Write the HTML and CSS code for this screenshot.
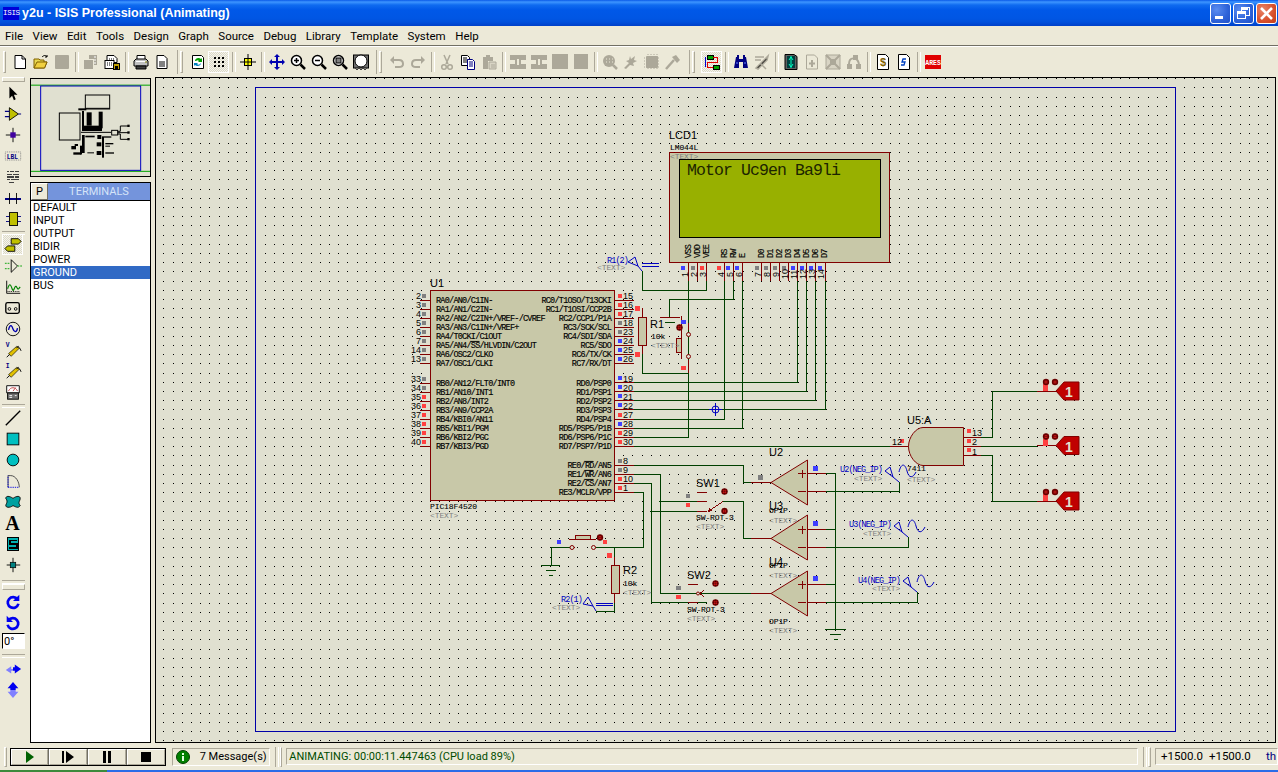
FILE: index.html
```html
<!DOCTYPE html>
<html lang="en">
<head>
<meta charset="utf-8">
<title>y2u - ISIS Professional (Animating)</title>
<link rel="stylesheet" href="styles.css">
</head>
<body>
<div class="window">
  <header class="titlebar">
    <span class="app-icon">ISIS</span>
    <span class="title">y2u - ISIS Professional (Animating)</span>
    <div class="win-btns">
      <button class="wb"><svg width="21" height="21" viewBox="0 0 21 21"><rect x="5" y="13" width="8" height="3" fill="#fff"/></svg></button>
      <button class="wb"><svg width="21" height="21" viewBox="0 0 21 21" fill="none" stroke="#fff" shape-rendering="crispEdges"><path d="M8 4.500h8v8h-3M8 4.500v3" stroke-width="1"/><path d="M8 6h7" stroke-width="2"/><rect x="4.500" y="8.500" width="8" height="7"/><path d="M5 10h7" stroke-width="2"/></svg></button>
      <button class="wb wb-close"><svg width="21" height="21" viewBox="0 0 21 21"><path d="M5 5l11 11M16 5L5 16" stroke="#fff" stroke-width="2.600"/></svg></button>
    </div>
  </header>
  <nav class="menubar">
    <span>File</span><span>View</span><span>Edit</span><span>Tools</span><span>Design</span><span>Graph</span><span>Source</span><span>Debug</span><span>Library</span><span>Template</span><span>System</span><span>Help</span>
  </nav>
  <div class="toolbar">
    <i class="handle handle-first"></i>
    <b class="tb"><svg viewBox="0 0 16 16" class="ic"><path d="M3 1.500h7l3.500 3.500v9.500H3z" fill="#fff" stroke="#000"/><path d="M10 1.500V5h3.500" fill="none" stroke="#000"/></svg></b>
    <b class="tb"><svg viewBox="0 0 16 16" class="ic"><path d="M1 14V5h5l1 1h4v2h3l-2.500 6z" fill="#e8d850" stroke="#806000"/><path d="M1 14l3-6h10l-2.500 6z" fill="#f0d040" stroke="#806000"/><path d="M9 3c2-2 4-2 5 0M14 3V1M14 3h-2" fill="none" stroke="#000"/></svg></b>
    <b class="tb"><svg viewBox="0 0 16 16" class="ic"><rect x="1" y="1" width="14" height="14" rx="1" fill="#aca899"/></svg></b>
    <i class="sep"></i>
    <b class="tb"><svg viewBox="0 0 16 16" class="ic"><path d="M1 6h9v9H1z" fill="#aca899"/><path d="M6 1h8v10h-3V5H6z" fill="#aca899"/><path d="M11 3h2M11 6h2M11 9h2" stroke="#fff"/></svg></b>
    <b class="tb"><svg viewBox="0 0 16 16" class="ic"><path d="M3 1.500h7l3 3v4H3z" fill="#fff" stroke="#000"/><path d="M5 5h1M7 5h1M9 5h1M5 7h1M7 7h1M9 7h1" stroke="#000"/><rect x="1" y="6.500" width="9" height="8" fill="#fff" stroke="#000"/><rect x="9.500" y="9.500" width="6" height="6" fill="#c0a000" stroke="#000"/><rect x="11" y="12" width="3" height="3" fill="#000"/><path d="M3 9h1M5 9h1M7 9h1M3 11h1M5 11h1M7 11h1" stroke="#000"/></svg></b>
    <i class="sep"></i>
    <b class="tb"><svg viewBox="0 0 16 16" class="ic"><path d="M4 1.500h8v4H4z" fill="#fff" stroke="#000"/><path d="M1 7l2-2h10l2 2v5H1z" fill="#c0c0c0" stroke="#000"/><path d="M3 7.500h10" stroke="#fff"/><path d="M3 12h10v3H3z" fill="#404040" stroke="#000"/><path d="M12 8h2" stroke="#808000"/></svg></b>
    <b class="tb"><svg viewBox="0 0 16 16" class="ic"><path d="M3 1.500h7l3 3v10H3z" fill="#fff" stroke="#000"/><rect x="5" y="7" width="6" height="6" fill="#808080"/></svg></b>
    <i class="grip"><i class="handle"></i></i>
    <b class="tb"><svg viewBox="0 0 16 16" class="ic"><path d="M2.500 1.500h9l2 2v11h-11z" fill="#fff" stroke="#000"/><path d="M5 7c0-3 4-4 6-2l1-1v4H8l1-1c-1-1-2-1-3 0z" fill="#00a000"/><path d="M11 9c0 3-4 4-6 2l-1 1V9h4l-1 1c1 1 2 1 3 0z" fill="#0080c0"/></svg></b>
    <b class="tb on"><svg viewBox="0 0 16 16" class="ic"><path d="M3 3h2v2H3zM7 3h2v2H7zM11 3h2v2h-2zM3 7h2v2H3zM7 7h2v2H7zM11 7h2v2h-2zM3 11h2v2H3zM7 11h2v2H7zM11 11h2v2h-2z" fill="#000"/></svg></b>
    <i class="sep"></i>
    <b class="tb"><svg viewBox="0 0 16 16" class="ic"><rect x="4.500" y="4.500" width="7" height="7" fill="#ffff00" stroke="#000"/><path d="M8 0v16M0 8h16" stroke="#000" stroke-width="1"/></svg></b>
    <i class="sep"></i>
    <b class="tb"><svg viewBox="0 0 16 16" class="ic"><path d="M8 0l3 3H9v4h4V5l3 3-3 3V9H9v4h2l-3 3-3-3h2V9H3v2L0 8l3-3v2h4V3H5z" fill="#0000b0"/></svg></b>
    <b class="tb"><svg viewBox="0 0 16 16" class="ic"><circle cx="6.500" cy="6.500" r="5" fill="#fff" stroke="#000" stroke-width="1.500"/><path d="M4 6.500h5M6.500 4v5" stroke="#000" stroke-width="1.500"/><path d="M10.500 10.500L15 15" stroke="#000" stroke-width="2.500"/></svg></b>
    <b class="tb"><svg viewBox="0 0 16 16" class="ic"><circle cx="6.500" cy="6.500" r="5" fill="#fff" stroke="#000" stroke-width="1.500"/><path d="M4 6.500h5" stroke="#000" stroke-width="1.500"/><path d="M10.500 10.500L15 15" stroke="#000" stroke-width="2.500"/></svg></b>
    <b class="tb"><svg viewBox="0 0 16 16" class="ic"><circle cx="6.500" cy="6.500" r="5" fill="#fff" stroke="#000" stroke-width="1.500"/><rect x="4" y="4" width="5" height="5" fill="#808080" stroke="#000"/><path d="M10.500 10.500L15 15" stroke="#000" stroke-width="2.500"/></svg></b>
    <b class="tb"><svg viewBox="0 0 16 16" class="ic"><rect x="0.500" y="1" width="15" height="13" fill="#707070" stroke="#000"/><circle cx="8" cy="7" r="6" fill="#fff" stroke="#000"/><path d="M2 14l2 2 2-2 2 2 2-2 2 2 2-2" fill="none" stroke="#404040"/></svg></b>
    <i class="grip"><i class="handle"></i></i>
    <b class="tb"><svg viewBox="0 0 16 16" class="ic"><path d="M2 6h8c3 0 4 2 4 4s-2 3-4 3H6" fill="none" stroke="#aca899" stroke-width="2"/><path d="M5 2v8L1 6z" fill="#aca899"/></svg></b>
    <b class="tb"><svg viewBox="0 0 16 16" class="ic"><path d="M14 6H6C3 6 2 8 2 10s2 3 4 3h4" fill="none" stroke="#aca899" stroke-width="2"/><path d="M11 2v8l4-4z" fill="#aca899"/></svg></b>
    <i class="sep"></i>
    <b class="tb"><svg viewBox="0 0 16 16" class="ic"><path d="M5 1l4 9M11 1L7 10" stroke="#aca899" stroke-width="1.500"/><circle cx="5" cy="13" r="2.300" fill="none" stroke="#aca899" stroke-width="1.500"/><circle cx="11" cy="13" r="2.300" fill="none" stroke="#aca899" stroke-width="1.500"/></svg></b>
    <b class="tb"><svg viewBox="0 0 16 16" class="ic"><path d="M1.500 1.500h6l2 2v8h-8z" fill="#fff" stroke="#000"/><path d="M3 4h4M3 6h5M3 8h5" stroke="#000"/><path d="M7.500 5.500h5l2 2v8h-7z" fill="#fff" stroke="#000080"/><path d="M9 8h4M9 10h4M9 12h4" stroke="#000080"/></svg></b>
    <b class="tb"><svg viewBox="0 0 16 16" class="ic"><path d="M2 3h3V1h4v2h3v4H7v8H2z" fill="#aca899"/><path d="M8 8h7v7H8z" fill="#d8d4c4" stroke="#aca899"/><path d="M10 11h4M10 13h4" stroke="#aca899"/></svg></b>
    <i class="sep"></i>
    <b class="tb"><svg viewBox="0 0 16 16" class="ic"><path d="M0 1h16v5h-5v4h5v5H0v-5h5V6H0z" fill="#aca899"/><path d="M7 5v6h2V5z" fill="#ece9d8"/></svg></b>
    <b class="tb"><svg viewBox="0 0 16 16" class="ic"><path d="M0 1h16v5h-5v4h5v5H0v-5h5V6H0z" fill="#aca899"/><path d="M7 5v6h2V5z" fill="#ece9d8"/></svg></b>
    <b class="tb"><svg viewBox="0 0 16 16" class="ic"><rect y="0" width="16" height="15" fill="#aca899"/></svg></b>
    <b class="tb"><svg viewBox="0 0 16 16" class="ic"><rect x="1" y="0" width="14" height="15" fill="#aca899"/></svg></b>
    <i class="sep"></i>
    <b class="tb"><svg viewBox="0 0 16 16" class="ic"><circle cx="7" cy="7" r="6" fill="#aca899"/><path d="M4 5h1M7 5h1M10 5h1M4 8h1M7 8h1M10 8h1" stroke="#ece9d8"/><path d="M11 11l4 4" stroke="#aca899" stroke-width="2.500"/></svg></b>
    <b class="tb"><svg viewBox="0 0 16 16" class="ic"><path d="M1 14l5-5-3-2 3-1 1-4 1 3 4-3-1 4 3 1-4 2 1 3-4-1-4 4z" fill="#aca899"/></svg></b>
    <b class="tb"><svg viewBox="0 0 16 16" class="ic"><rect x="2" y="2" width="12" height="12" rx="1" fill="#aca899"/><path d="M4 0v16M7 0v16M10 0v16M13 0v16M0 4h16M0 7h16M0 10h16M0 13h16" stroke="#aca899" stroke-dasharray="1 1"/></svg></b>
    <b class="tb"><svg viewBox="0 0 16 16" class="ic"><path d="M1 15L9 6" stroke="#aca899" stroke-width="2.500"/><path d="M7 3l4-2 4 5-3 3z" fill="#aca899"/></svg></b>
    <i class="grip grip-wide"><i class="handle"></i></i>
    <b class="tb on"><svg viewBox="0 0 16 16" class="ic" shape-rendering="crispEdges"><rect x="3" y="1" width="6" height="4" fill="#00a000" stroke="#000" stroke-width="1"/><rect x="9" y="11" width="6" height="4" fill="#00a000" stroke="#000" stroke-width="1"/><path d="M9 3h4v5H3v5h6" fill="none" stroke="#e00000"/><path d="M1 3v10" stroke="#0000d0" fill="none"/></svg></b>
    <i class="sep"></i>
    <b class="tb"><svg viewBox="0 0 16 16" class="ic"><path d="M3 3h3v2h4V3h3l2 11h-5V8H6v6H1z" fill="#000080"/><path d="M4 1h2v3H4zM10 1h2v3h-2z" fill="#000080"/><path d="M3 9h2M11 9h2" stroke="#6080ff"/></svg></b>
    <b class="tb"><svg viewBox="0 0 16 16" class="ic"><path d="M1 3h9M1 6h6" stroke="#aca899" stroke-width="1.500"/><path d="M2 14l9-9 3-3-1 4-9 9zM6 9l6 6" stroke="#aca899" stroke-width="1.500"/></svg></b>
    <i class="sep"></i>
    <b class="tb"><svg viewBox="0 0 16 16" class="ic"><path d="M2 0.500h9l3 2v13H2z" fill="#606060" stroke="#000"/><rect x="4" y="2" width="8" height="12" fill="#004040"/><path d="M8 2v12M6 6l2-3 2 3M6 10l2 3 2-3" stroke="#00ffc0" fill="none"/></svg></b>
    <b class="tb"><svg viewBox="0 0 16 16" class="ic"><path d="M2.500 1h8l3 3v11h-11z" fill="#ece9d8" stroke="#aca899"/><path d="M8 6v7M5 9.500h6" stroke="#aca899" stroke-width="2"/></svg></b>
    <b class="tb"><svg viewBox="0 0 16 16" class="ic"><path d="M1 1h14v14H1z" fill="#d8d4c4" stroke="#aca899"/><path d="M1 1l14 14M15 1L1 15" stroke="#aca899" stroke-width="2"/><rect x="5" y="5" width="6" height="6" fill="#aca899"/></svg></b>
    <b class="tb"><svg viewBox="0 0 16 16" class="ic"><rect x="1" y="10" width="5" height="5" fill="#aca899"/><rect x="10" y="10" width="5" height="5" fill="#aca899"/><path d="M3 10C3 3 11 2 13 10" fill="none" stroke="#aca899" stroke-width="2"/><rect x="7" y="1" width="5" height="5" fill="#aca899"/></svg></b>
    <i class="sep"></i>
    <b class="tb"><svg viewBox="0 0 16 16" class="ic"><path d="M2.500 0.500h8l3 3v12h-11z" fill="#fff" stroke="#000"/><text x="5" y="12" class="dollar">$</text></svg></b>
    <b class="tb"><svg viewBox="0 0 16 16" class="ic"><path d="M2.500 0.500h8l3 3v12h-11z" fill="#fff" stroke="#000"/><path d="M10 5H7L6 8h3l-1 3H5" fill="none" stroke="#0040c0" stroke-width="1.300"/></svg></b>
    <i class="sep"></i>
    <b class="tb"><svg viewBox="0 0 16 16" class="ic ic-wide"><rect x="0" y="1" width="16" height="14" fill="#e00000"/><text x="0.300" y="11" class="ares">ARES</text></svg></b>
  </div>

  <main class="workspace">
    <aside class="modes">
      <i class="vhandle"></i>
      <b class="mb"><svg viewBox="0 0 20 20" class="mi"><path d="M6 3v13l3-3 2 5 2-1-2-5h4z" fill="#000"/></svg></b>
      <b class="mb"><svg viewBox="0 0 20 20" class="mi"><path d="M6 3v14l10-7z" fill="#c0c000" stroke="#000"/><path d="M1 7h5M1 13h5M16 10h3" stroke="#000080" stroke-width="1.300"/></svg></b>
      <b class="mb"><svg viewBox="0 0 20 20" class="mi"><path d="M10 2v16M2 10h16" stroke="#000" /><rect x="7" y="7" width="6" height="6" fill="#4000a0"/></svg></b>
      <b class="mb"><svg viewBox="0 0 20 20" class="mi"><rect x="1.500" y="5.500" width="17" height="9" fill="none" stroke="#808080" stroke-dasharray="1 1"/><text x="3" y="13" class="lbl-ic">LBL</text></svg></b>
      <b class="mb"><svg viewBox="0 0 20 20" class="mi" shape-rendering="crispEdges"><path d="M3 4h3M7 4h4M12 4h5M3 7h6M10 7h7M3 10h2M6 10h5M12 10h5M3 13h4M8 13h9M6 16h5" stroke="#404040" stroke-width="1.500"/></svg></b>
      <b class="mb"><svg viewBox="0 0 20 20" class="mi" shape-rendering="crispEdges"><path d="M1 11h18" stroke="#000080" stroke-width="3"/><path d="M6 4v13M14 4v13" stroke="#000" stroke-width="1"/></svg></b>
      <b class="mb"><svg viewBox="0 0 20 20" class="mi" shape-rendering="crispEdges"><rect x="6" y="3" width="9" height="14" fill="#c0c000" stroke="#000" stroke-width="1"/><path d="M2 7h4M2 13h4M15 7h4M15 13h4" stroke="#000080"/></svg></b>
      <i class="msep"></i>
      <b class="mb on"><svg viewBox="0 0 20 20" class="mi"><path d="M8 3h8l3 3-3 3H8zM4 11h8v6H4l-3-3z" fill="#c0c000" stroke="#000"/></svg></b>
      <b class="mb"><svg viewBox="0 0 20 20" class="mi"><path d="M1 7h5M1 13h5" stroke="#00a000" stroke-dasharray="2 1"/><path d="M8 3v14" stroke="#000"/><path d="M8 3l7 7-7 7" fill="none" stroke="#000"/><path d="M15 10h5" stroke="#00a000" stroke-dasharray="2 1"/></svg></b>
      <b class="mb"><svg viewBox="0 0 20 20" class="mi"><path d="M3 3v14h15" fill="none" stroke="#000"/><path d="M4 12c2-6 3-6 5 0s3-6 5-2 2 2 4 0" fill="none" stroke="#008000" stroke-width="1.300"/><path d="M4 15h14" stroke="#000" stroke-dasharray="1 1"/></svg></b>
      <b class="mb"><svg viewBox="0 0 20 20" class="mi"><rect x="2" y="4" width="15" height="12" rx="2" fill="none" stroke="#000" stroke-width="1.500"/><circle cx="6" cy="11" r="1.500" fill="none" stroke="#000"/><circle cx="13" cy="11" r="1.500" fill="none" stroke="#000"/></svg></b>
      <b class="mb"><svg viewBox="0 0 20 20" class="mi"><circle cx="10" cy="10" r="7.500" fill="none" stroke="#000"/><path d="M5 11c2-8 4-4 5-1s4 5 5-1" fill="none" stroke="#0000b0" stroke-width="1.500"/></svg></b>
      <b class="mb"><svg viewBox="0 0 20 20" class="mi"><path d="M3 18L16 6" stroke="#000"/><path d="M5 14l9-8 3 2-9 9z" fill="#e0c000" stroke="#000" stroke-width=".7"/><path d="M14 8c1-3 3-2 5 3" fill="none" stroke="#000"/><text x="2" y="7" class="lbl-ic">V</text></svg></b>
      <b class="mb"><svg viewBox="0 0 20 20" class="mi"><path d="M3 18L16 6" stroke="#000"/><path d="M5 14l9-8 3 2-9 9z" fill="#e0c000" stroke="#000" stroke-width=".7"/><path d="M14 8c1-3 3-2 5 3" fill="none" stroke="#000"/><text x="2" y="7" class="lbl-ic">I</text></svg></b>
      <b class="mb"><svg viewBox="0 0 20 20" class="mi"><path d="M3 3h14v8H3z" fill="#fff" stroke="#000"/><path d="M5 9c2-5 8-5 10 0M10 9l3-4" fill="none" stroke="#c04040"/><rect x="4" y="11" width="12" height="7" fill="#707070" stroke="#000"/><path d="M6 14h3M6 16h3M12 14h2" stroke="#fff"/></svg></b>
      <i class="msep"></i>
      <b class="mb"><svg viewBox="0 0 20 20" class="mi"><path d="M2 18L18 2" stroke="#000" stroke-width="1.500"/></svg></b>
      <b class="mb"><svg viewBox="0 0 20 20" class="mi"><rect x="3.500" y="3.500" width="13" height="13" fill="#00c0c0" stroke="#000"/></svg></b>
      <b class="mb"><svg viewBox="0 0 20 20" class="mi"><circle cx="10" cy="10" r="6.500" fill="#00c0c0" stroke="#000"/></svg></b>
      <b class="mb"><svg viewBox="0 0 20 20" class="mi"><path d="M4.500 17V4h3C13 4 17 11 17 17" fill="none" stroke="#404040"/><path d="M4.500 17V4M4.500 17H17" fill="none" stroke="#0000e0" stroke-dasharray="1.500 1"/></svg></b>
      <b class="mb"><svg viewBox="0 0 20 20" class="mi"><path d="M2 6c0-3 4-3 8 0 4-3 8-3 8 0s-3 4 0 8c-2 3-4 2-8 0-4 3-8 2-8 0s3-4 0-8z" fill="#00a0a0" stroke="#000"/></svg></b>
      <b class="mb"><span class="font-a">A</span></b>
      <b class="mb"><svg viewBox="0 0 20 20" class="mi" shape-rendering="crispEdges"><rect x="4" y="3" width="12" height="14" fill="#00b0b0" stroke="#000" stroke-width="1.500"/><path d="M14 6H7v4h7v4H6" fill="none" stroke="#000" stroke-width="2"/></svg></b>
      <b class="mb"><svg viewBox="0 0 20 20" class="mi"><path d="M10 2v16M3 10h15" stroke="#000"/><rect x="7" y="7" width="6" height="6" fill="#008080" stroke="#000" stroke-width=".8"/></svg></b>
      <i class="msep msep-two"></i>
      <b class="mb"><svg viewBox="0 0 20 20" class="mi"><path d="M15 7a6 6 0 1 0 1 5" fill="none" stroke="#0000f0" stroke-width="3"/><path d="M17 2v7h-7z" fill="#0000f0"/></svg></b>
      <b class="mb"><svg viewBox="0 0 20 20" class="mi"><path d="M5 7a6 6 0 1 1-1 5" fill="none" stroke="#0000f0" stroke-width="3"/><path d="M3 2v7h7z" fill="#0000f0"/></svg></b>
      <input class="angle" value="0°" aria-label="Rotation">
      <i class="msep msep-low"></i>
      <b class="mb"><svg viewBox="0 0 20 20" class="mi"><path d="M10 10H8V7l-6 4 6 4v-3h2z" fill="#8080ff"/><path d="M10 8h2V5l7 5-7 5v-3h-2z" fill="#0000f0"/></svg></b>
      <b class="mb"><svg viewBox="0 0 20 20" class="mi"><path d="M7 10V8H4l6-7 6 7h-3v2z" fill="#0000f0"/><path d="M7 10v2H4l6 7 6-7h-3v-2z" fill="#8080ff"/></svg></b>
    </aside>

    <section class="panel">
      <div class="overview">
        <svg class="thumb" viewBox="93 0 357 294" width="119" height="98">
          <path d="M0 18.500H360" stroke="#00a000" stroke-width="3" transform="translate(91 0)"/>
          <path d="M0 277H360" stroke="#00a000" stroke-width="3" transform="translate(91 0)"/>
          <rect x="122" y="21" width="300" height="253" fill="none" stroke="#0000c0" stroke-width="3"/>
          <g fill="none" stroke="#000" stroke-width="3">
            <rect x="256" y="48" width="73" height="42"/>
            <path d="M258 88h70"/>
            <rect x="178" y="102" width="62" height="81"/>
            <rect x="335" y="154" width="18" height="14"/>
            <path d="M353 157h8v-16h24M353 161h34M353 165h8v16h24M243 160h90"/>
          </g>
          <g fill="#000">
            <rect x="235" y="88" width="24" height="6"/>
            <rect x="246" y="96" width="6" height="52"/>
            <rect x="296" y="98" width="12" height="50"/>
            <rect x="246" y="140" width="60" height="16"/>
            <rect x="260" y="100" width="15" height="40"/>
            <rect x="382" y="137" width="7" height="7"/><rect x="382" y="157" width="7" height="7"/><rect x="382" y="177" width="7" height="7"/>
            <rect x="246" y="168" width="8" height="54"/>
            <rect x="256" y="170" width="28" height="5"/>
            <rect x="292" y="168" width="12" height="12"/><rect x="290" y="190" width="14" height="12"/><rect x="290" y="216" width="14" height="12"/>
            <rect x="306" y="172" width="6" height="64"/>
            <rect x="312" y="172" width="22" height="4"/><rect x="316" y="192" width="24" height="4"/><rect x="316" y="200" width="14" height="3"/><rect x="316" y="220" width="26" height="4"/>
            <rect x="214" y="201" width="14" height="10"/><rect x="224" y="195" width="10" height="6"/><rect x="220" y="220" width="24" height="7"/><rect x="240" y="200" width="6" height="26"/><rect x="262" y="220" width="20" height="3"/>
          </g>
        </svg>
      </div>
      <div class="term-head"><span class="p-btn">P</span><span class="term-title">TERMINALS</span></div>
      <ul class="term-list">
        <li>DEFAULT</li><li>INPUT</li><li>OUTPUT</li><li>BIDIR</li><li>POWER</li><li class="sel">GROUND</li><li>BUS</li>
      </ul>
    </section>

    <section class="canvas">
      <svg class="sheet" viewBox="156 78 1120 665" width="1120" height="665">
        <defs>
          <g id="pr"><circle r="3.200" fill="#700000"/><circle r="1.500" fill="#ff2020"/><path d="M-3 0h6M0-3v6" stroke="#400000" stroke-width=".5"/></g>
          <g id="gen"><path d="M0 0l8-9h15v18H8z" fill="#c00000" stroke="#800000"/><text x="13" y="6" class="gen1">1</text><path d="M-19 0H0" class="rd"/></g>
          <g id="sg" class="blu"><path d="M-14-11l5-4 3 10zM0 0l-6-5" /><path d="M0-10c2-9 6-9 8-1s6 7 9 1" /></g>
        </defs>
        <path class="dots" d="M163.400 78.500H1275M163.400 87.500H1275M163.400 97.500H1275M163.400 106.500H1275M163.400 115.500H1275M163.400 124.500H1275M163.400 133.500H1275M163.400 143.500H1275M163.400 152.500H1275M163.400 161.500H1275M163.400 170.500H1275M163.400 179.500H1275M163.400 189.500H1275M163.400 198.500H1275M163.400 207.500H1275M163.400 216.500H1275M163.400 225.500H1275M163.400 235.500H1275M163.400 244.500H1275M163.400 253.500H1275M163.400 262.500H1275M163.400 271.500H1275M163.400 281.500H1275M163.400 290.500H1275M163.400 299.500H1275M163.400 308.500H1275M163.400 317.500H1275M163.400 327.500H1275M163.400 336.500H1275M163.400 345.500H1275M163.400 354.500H1275M163.400 363.500H1275M163.400 373.500H1275M163.400 382.500H1275M163.400 391.500H1275M163.400 400.500H1275M163.400 409.500H1275M163.400 419.500H1275M163.400 428.500H1275M163.400 437.500H1275M163.400 446.500H1275M163.400 455.500H1275M163.400 465.500H1275M163.400 474.500H1275M163.400 483.500H1275M163.400 492.500H1275M163.400 501.500H1275M163.400 511.500H1275M163.400 520.500H1275M163.400 529.500H1275M163.400 538.500H1275M163.400 547.500H1275M163.400 557.500H1275M163.400 566.500H1275M163.400 575.500H1275M163.400 584.500H1275M163.400 593.500H1275M163.400 603.500H1275M163.400 612.500H1275M163.400 621.500H1275M163.400 630.500H1275M163.400 639.500H1275M163.400 649.500H1275M163.400 658.500H1275M163.400 667.500H1275M163.400 676.500H1275M163.400 685.500H1275M163.400 695.500H1275M163.400 704.500H1275M163.400 713.500H1275M163.400 722.500H1275M163.400 731.500H1275M163.400 740.500H1275"/>
        <rect x="255.500" y="87.500" width="920" height="644" class="border"/>

        <!-- wires -->
        <path class="wire" d="M634 382.500H797.500V281M634 391.500H806.500V281M634 400.500H815.500V281M634 409.500H825.500V281M634 419.500H724.500V281M634 428.500H742.500V281M634 437.500H688.500V281M634 446.500H908M706.500 281V290.500H642.500V271M642.500 345V373.500H689M733.500 281V299.500H669.500V317.500H680M665 322.500H675M634 465.500H743.500V482.500H771M634 474.500H660.500V593.500H771M634 483.500H651.500V602.500H707M634 492.500H643.500V547.500H595M570 547.500H551.500V565.500M541 565.500H560M546 570.500H556M549 575.500H553M659 501.500H707M650 511.500H707M723 501.500H743.500V538.500H771M614.500 547.500V566M614.500 593V611.500H596M826 473.500H835.500V629.500M826 491.500H899.500V482M826 529.500H835.500M826 547.500H908.500V537M826 584.500H835.500M826 602.500H917.500V592M825 629.500H846M830 634.500H841M834 639.500H838M981 437.500H992.500V391.500H1037M981 446.500H1037M981 455.500H992.500V501.500H1037"/>

        <!-- component bodies -->
        <rect x="430.500" y="290.500" width="184" height="210" class="body"/>
        <rect x="669.500" y="152.500" width="220" height="110" class="body"/>
        <rect x="679.500" y="159.500" width="201" height="78" class="lcd"/>
        <rect x="638.500" y="317.500" width="8" height="28" class="body"/>
        <rect x="611.500" y="565.500" width="8" height="28" class="body"/>
        <path class="body" d="M771 482.500L807.500 460V505zM771 538.500L807.500 515V560zM771 593.500L807.500 571V616z"/>
        <path class="body" d="M923 427.500H963.500V465.500H923C916 465.500 908.500 456 908.500 446.500S916 427.500 923 427.500z"/>
        <rect x="575.500" y="535.500" width="15" height="4" class="body"/>
        <rect x="676.500" y="338.500" width="5" height="14" class="body"/>

        <!-- red stubs -->
        <path class="rd" d="M420 300.500H430M420 309.500H430M420 318.500H430M420 327.500H430M420 336.500H430M420 345.500H430M420 354.500H430M420 363.500H430M420 383.500H430M420 392.500H430M420 401.500H430M420 410.500H430M420 419.500H430M420 428.500H430M420 437.500H430M420 446.500H430M615 300.500H634M615 309.500H634M615 318.500H634M615 327.500H634M615 336.500H634M615 345.500H634M615 354.500H634M615 363.500H634M615 382.500H634M615 391.500H634M615 400.500H634M615 409.500H634M615 419.500H634M615 428.500H634M615 437.500H634M615 446.500H634M615 465.500H634M615 474.500H634M615 483.500H634M615 492.500H634M688.500 262V281M697.500 262V281M706.500 262V281M724.500 262V281M733.500 262V281M742.500 262V281M761.500 262V281M770.500 262V281M779.500 262V281M788.500 262V281M797.500 262V281M806.500 262V281M815.500 262V281M825.500 262V281M642.500 308V317M642.500 345V354M614.500 557V566M614.500 593V603M751 482.500H771M751 538.500H771M751 593.500H771M807 473.500H826M807 491.500H826M807 529.500H826M807 547.500H826M807 584.500H826M807 602.500H826M890 446.500H908M963 437.500H981M963 446.500H981M963 455.500H981M697 492.500H707M697 501.500H707M697 511.500H707M688 584.500H698M688 602.500H698M708 511.500L723 501.500M569 539.500H596M575 547H570M595 547.500H596M681.500 316V359M688.500 323V330M688.500 360V373M660 317.500H680"/>
        <circle cx="572" cy="547.500" r="2" class="pad"/><circle cx="593.500" cy="547.500" r="2" class="pad"/>
        <circle cx="688.500" cy="334.500" r="2" class="pad"/><circle cx="688.500" cy="356.500" r="2" class="pad"/>
        <circle cx="698" cy="593.500" r="1.500" class="pad"/>
        <path class="rd" d="M700 593.500l4-3M700 593.500l4 3"/>
        <path class="rd" d="M708 511.500l4-1M708 511.500l2-3"/>
        <path d="M798 473.500h8M802 469.500v8M798 491.500h8M798 529.500h8M802 525.500v8M798 547.500h8M798 584.500h8M802 580.500v8M798 602.500h8" class="rd"/>

        <!-- terminals & generators -->
        <use href="#gen" x="1056" y="391"/><use href="#gen" x="1056" y="445.500"/><use href="#gen" x="1056" y="501"/>
        <g class="blu">
          <path d="M628 262l7-5 3 9zM638 266l4 5M642 263.500h17M642 266.500h17"/>
          <path d="M583 604l5-7 5 9zM593 606l3 5M596 603.500h17M596 605.500h17"/>
          <circle cx="715.500" cy="409.500" r="3.500"/><path d="M715.500 403v13M709 409.500h13"/>
        </g>
        <use href="#sg" x="899" y="482"/><use href="#sg" x="908" y="537"/><use href="#sg" x="917" y="592"/>

        <!-- state squares -->
        <path class="sq-gray" d="M422 294h4v4h-4zM422 303h4v4h-4zM422 312h4v4h-4zM422 321h4v4h-4zM422 330h4v4h-4zM422 339h4v4h-4zM422 348h4v4h-4zM422 357h4v4h-4zM422 377h4v4h-4zM422 386h4v4h-4zM618 321h4v4h-4zM618 330h4v4h-4zM618 459h4v4h-4zM618 468h4v4h-4zM691 266h4v4h-4zM755 266h4v4h-4zM764 266h4v4h-4zM773 266h4v4h-4zM782 266h4v4h-4zM758 475h5v5h-5zM686 494h4v4h-4zM676 586h5v4h-5z"/>
        <path class="sq-red" d="M422 395h4v4h-4zM422 404h4v4h-4zM422 413h4v4h-4zM422 422h4v4h-4zM422 431h4v4h-4zM422 440h4v4h-4zM618 294h4v4h-4zM618 303h4v4h-4zM618 312h4v4h-4zM618 413h4v4h-4zM618 431h4v4h-4zM618 440h4v4h-4zM618 477h4v4h-4zM618 486h4v4h-4zM700 266h4v4h-4zM717 266h4v4h-4zM635 306h5v5h-5zM635 352h5v5h-5zM681 366h5v4h-5zM607 553h5v5h-5zM603 540h4v4h-4zM686 503h4v4h-4zM676 595h5v4h-5zM900 439h4v4h-4zM967 429h4v4h-4zM967 439h4v4h-4zM967 448h4v4h-4zM1043 384h5v7h-5zM1043 439h5v7h-5zM1043 494h5v7h-5z"/>
        <path class="sq-blue" d="M618 339h4v4h-4zM618 348h4v4h-4zM618 357h4v4h-4zM618 376h4v4h-4zM618 385h4v4h-4zM618 394h4v4h-4zM618 403h4v4h-4zM618 422h4v4h-4zM681 266h4v4h-4zM726 266h4v4h-4zM735 266h4v4h-4zM791 266h4v4h-4zM800 266h4v4h-4zM809 266h4v4h-4zM818 266h4v4h-4zM681 320h5v4h-5zM557 540h4v4h-4zM813 466h5v5h-5zM813 521h5v5h-5zM813 576h5v5h-5z"/>
        <use href="#pr" x="679.500" y="327.500"/><use href="#pr" x="600" y="537.500"/><use href="#pr" x="724.500" y="491.500"/><use href="#pr" x="724.500" y="511"/><use href="#pr" x="715.500" y="583.500"/><use href="#pr" x="715.500" y="602.500"/><use href="#pr" x="1046" y="382"/><use href="#pr" x="1055" y="382"/><use href="#pr" x="1046" y="436.500"/><use href="#pr" x="1055" y="436.500"/><use href="#pr" x="1046" y="492"/><use href="#pr" x="1055" y="492"/>

        <!-- PIC labels -->
        <g class="pin">
          <text x="436" y="303">RA0/AN0/C1IN-</text><text x="436" y="312">RA1/AN1/C2IN-</text><text x="436" y="321">RA2/AN2/C2IN+/VREF-/CVREF</text><text x="436" y="330">RA3/AN3/C1IN+/VREF+</text><text x="436" y="339">RA4/T0CKI/C1OUT</text><text x="436" y="348">RA5/AN4/<tspan class="ov">SS</tspan>/HLVDIN/C2OUT</text><text x="436" y="357">RA6/OSC2/CLKO</text><text x="436" y="366">RA7/OSC1/CLKI</text>
          <text x="436" y="386">RB0/AN12/FLT0/INT0</text><text x="436" y="395">RB1/AN10/INT1</text><text x="436" y="404">RB2/AN8/INT2</text><text x="436" y="413">RB3/AN9/CCP2A</text><text x="436" y="422">RB4/KBI0/AN11</text><text x="436" y="431">RB5/KBI1/PGM</text><text x="436" y="440">RB6/KBI2/PGC</text><text x="436" y="449">RB7/KBI3/PGD</text>
        </g>
        <g class="pin pin-end">
          <text x="611" y="303">RC0/T1OSO/T13CKI</text><text x="611" y="312">RC1/T1OSI/CCP2B</text><text x="611" y="321">RC2/CCP1/P1A</text><text x="611" y="330">RC3/SCK/SCL</text><text x="611" y="339">RC4/SDI/SDA</text><text x="611" y="348">RC5/SDO</text><text x="611" y="357">RC6/TX/CK</text><text x="611" y="366">RC7/RX/DT</text>
          <text x="611" y="386">RD0/PSP0</text><text x="611" y="395">RD1/PSP1</text><text x="611" y="404">RD2/PSP2</text><text x="611" y="413">RD3/PSP3</text><text x="611" y="422">RD4/PSP4</text><text x="611" y="431">RD5/PSP5/P1B</text><text x="611" y="440">RD6/PSP6/P1C</text><text x="611" y="449">RD7/PSP7/P1D</text>
          <text x="611" y="468">RE0/<tspan class="ov">RD</tspan>/AN5</text><text x="611" y="477">RE1/<tspan class="ov">WR</tspan>/AN6</text><text x="611" y="486">RE2/<tspan class="ov">CS</tspan>/AN7</text><text x="611" y="495">RE3/MCLR/VPP</text>
        </g>
        <g class="num">
          <text x="623" y="299">15</text><text x="623" y="308">16</text><text x="623" y="317">17</text><text x="623" y="326">18</text><text x="623" y="335">23</text><text x="623" y="344">24</text><text x="623" y="353">25</text><text x="623" y="362">26</text>
          <text x="623" y="382">19</text><text x="623" y="391">20</text><text x="623" y="400">21</text><text x="623" y="409">22</text><text x="623" y="418">27</text><text x="623" y="427">28</text><text x="623" y="436">29</text><text x="623" y="445">30</text>
          <text x="623" y="464">8</text><text x="623" y="473">9</text><text x="623" y="482">10</text><text x="623" y="491">1</text>
          <text x="892" y="445">12</text><text x="972" y="436">13</text><text x="972" y="445">2</text><text x="972" y="455">1</text>
        </g>
        <g class="num num-end">
          <text x="421" y="299">2</text><text x="421" y="308">3</text><text x="421" y="317">4</text><text x="421" y="326">5</text><text x="421" y="335">6</text><text x="421" y="344">7</text><text x="421" y="353">14</text><text x="421" y="362">13</text>
          <text x="421" y="382">33</text><text x="421" y="391">34</text><text x="421" y="400">35</text><text x="421" y="409">36</text><text x="421" y="418">37</text><text x="421" y="427">38</text><text x="421" y="436">39</text><text x="421" y="445">40</text>
        </g>
        <!-- LCD labels -->
        <text x="687" y="175" class="lcd-text">Motor Uc9en Ba9li</text>
        <g class="pin">
          <text transform="translate(691 258) rotate(-90)">VSS</text><text transform="translate(700 258) rotate(-90)">VDD</text><text transform="translate(709 258) rotate(-90)">VEE</text><text transform="translate(727 258) rotate(-90)">RS</text><text transform="translate(736 258) rotate(-90)">RW</text><text transform="translate(745 258) rotate(-90)">E</text><text transform="translate(764 258) rotate(-90)">D0</text><text transform="translate(773 258) rotate(-90)">D1</text><text transform="translate(782 258) rotate(-90)">D2</text><text transform="translate(791 258) rotate(-90)">D3</text><text transform="translate(800 258) rotate(-90)">D4</text><text transform="translate(809 258) rotate(-90)">D5</text><text transform="translate(818 258) rotate(-90)">D6</text><text transform="translate(827 258) rotate(-90)">D7</text>
        </g>
        <g class="num">
          <text transform="translate(688 277) rotate(-90)">1</text><text transform="translate(697 277) rotate(-90)">2</text><text transform="translate(706 277) rotate(-90)">3</text><text transform="translate(724 277) rotate(-90)">4</text><text transform="translate(733 277) rotate(-90)">5</text><text transform="translate(742 277) rotate(-90)">6</text><text transform="translate(761 277) rotate(-90)">7</text><text transform="translate(770 277) rotate(-90)">8</text><text transform="translate(779 277) rotate(-90)">9</text><text transform="translate(788 279) rotate(-90)">10</text><text transform="translate(797 279) rotate(-90)">11</text><text transform="translate(806 279) rotate(-90)">12</text><text transform="translate(815 279) rotate(-90)">13</text><text transform="translate(824 279) rotate(-90)">14</text>
        </g>
        <!-- reference labels -->
        <g class="ref">
          <text x="430" y="287">U1</text><text x="669" y="139">LCD1</text><text x="650" y="328">R1</text><text x="623" y="574">R2</text><text x="696" y="487">SW1</text><text x="687" y="579">SW2</text><text x="769" y="456">U2</text><text x="769" y="510">U3</text><text x="769" y="566">U4</text><text x="907" y="424">U5:A</text>
        </g>
        <g class="val">
          <text x="430" y="509">PIC18F4520</text><text x="670" y="150">LM044L</text><text x="651" y="339">10k</text><text x="623" y="586">10k</text><text x="696" y="520">SW-ROT-3</text><text x="687" y="612">SW-ROT-3</text><text x="769" y="513">OP1P</text><text x="769" y="568">OP1P</text><text x="769" y="624">OP1P</text><text x="907" y="471">7411</text>
        </g>
        <g class="tx">
          <text x="430" y="518">&lt;TEXT&gt;</text><text x="670" y="159">&lt;TEXT&gt;</text><text x="597" y="270">&lt;TEXT&gt;</text><text x="651" y="348">&lt;TEXT&gt;</text><text x="623" y="595">&lt;TEXT&gt;</text><text x="552" y="610">&lt;TEXT&gt;</text><text x="696" y="529">&lt;TEXT&gt;</text><text x="687" y="621">&lt;TEXT&gt;</text><text x="769" y="523">&lt;TEXT&gt;</text><text x="769" y="578">&lt;TEXT&gt;</text><text x="769" y="633">&lt;TEXT&gt;</text><text x="907" y="482">&lt;TEXT&gt;</text><text x="854" y="481">&lt;TEXT&gt;</text><text x="863" y="536">&lt;TEXT&gt;</text><text x="872" y="591">&lt;TEXT&gt;</text>
        </g>
        <g class="net">
          <text x="607" y="263">R1(2)</text><text x="561" y="602">R2(1)</text><text x="840" y="472">U2(NEG_IP)</text><text x="849" y="527">U3(NEG_IP)</text><text x="858" y="583">U4(NEG_IP)</text>
        </g>
      </svg>
    </section>
  </main>

  <footer class="statusbar">
    <i class="handle handle-status"></i>
    <div class="play">
      <b class="pb"><svg viewBox="0 0 12 12" class="pi"><path d="M2 0l8 6-8 6z" fill="#006000"/></svg></b>
      <b class="pb"><svg viewBox="0 0 12 12" class="pi"><path d="M0 0h2v12H0zM4 0l8 6-8 6z" fill="#000"/></svg></b>
      <b class="pb"><svg viewBox="0 0 12 12" class="pi"><path d="M2 0h3v12H2zM7 0h3v12H7z" fill="#000"/></svg></b>
      <b class="pb"><svg viewBox="0 0 12 12" class="pi"><rect x="1" y="1" width="10" height="10" fill="#000"/></svg></b>
    </div>
    <div class="messages">
      <svg viewBox="0 0 14 14" class="info"><circle cx="7" cy="7" r="6.500" fill="#008000" stroke="#004000"/><rect x="6" y="3" width="2" height="2" fill="#e0ffe0"/><rect x="6" y="6" width="2" height="5" fill="#e0ffe0"/></svg>
      <span class="msg-text">7 Message(s)</span>
    </div>
    <i class="sep sep-status"></i>
    <i class="handle handle-status2"></i>
    <div class="state">ANIMATING: 00:00:11.447463 (CPU load 89%)</div>
    <i class="sep sep-status"></i>
    <i class="handle handle-status2"></i>
    <div class="coords"><span class="c1">+1500.0</span><span class="c2">+1500.0</span><span class="unit">th</span></div>
  </footer>
  <div class="taskstrip"><i class="start"></i></div>
</div>
</body>
</html>
```
FILE: styles.css
```css
* { box-sizing: border-box; }
html, body { margin: 0; padding: 0; height: 100%; overflow: hidden; background: #ece9d8; }
i, b { display: block; font-style: normal; font-weight: normal; }
.window { width: 1278px; height: 772px; display: flex; flex-direction: column; font-family: Roboto, "Liberation Sans", sans-serif; font-size: 11.5px; color: #000; }

.titlebar { height: 26px; flex: none; display: flex; align-items: center; padding: 0 1px 0 3px; background: linear-gradient(180deg, #0a5ae8 0, #3d95ff 2px, #0f6bf0 5px, #0058e8 10px, #0056e4 18px, #0050dc 22px, #0040c8 26px); color: #fff; }
.app-icon { width: 16px; height: 13px; background: #0000d8; color: #fff; font: 7.500px "Liberation Mono", monospace; line-height: 13px; text-align: center; letter-spacing: -.3px; }
.title { margin-left: 3px; font: bold 12.500px "Liberation Sans", sans-serif; }
.win-btns { margin-left: auto; display: flex; gap: 2px; }
.wb { width: 21px; height: 21px; padding: 0; border: 1px solid #fff; border-radius: 3px; background: radial-gradient(circle at 30% 30%, #5a8cf0 0, #2d62d8 60%, #2050c8 100%); display: flex; align-items: center; justify-content: center; }
.wb svg { flex: none; }
.wb-close { background: radial-gradient(circle at 30% 30%, #e88468 0, #d8502c 60%, #c03c18 100%); }

.menubar { height: 19px; flex: none; display: flex; align-items: center; gap: 9.500px; padding-left: 5px; }
.toolbar { height: 32px; flex: none; display: flex; align-items: center; border-top: 1px solid #716f64; box-shadow: inset 0 1px 0 #fff; padding: 1px 0 0 3px; position: relative; }
.handle { width: 3px; height: 22px; border: 1px solid; border-color: #fff #aca899 #aca899 #fff; }
.handle-first { margin: 0 3px 0 0; }
.tb { width: 21px; height: 22px; flex: none; display: flex; align-items: center; justify-content: center; }
.tb.on { border: 1px solid #fff; background: repeating-conic-gradient(#f5f4ec 0 25%, #dcd9c8 0 50%) 0 0 / 2px 2px; }
.ic { width: 16px; height: 16px; display: block; overflow: visible; }
.ic-wide { width: 16px; }
.sep { width: 8px; height: 20px; flex: none; position: relative; }
.sep::after { content: ""; position: absolute; left: 3px; top: 0; width: 2px; height: 100%; border-left: 1px solid #aca899; border-right: 1px solid #fff; }
.grip { width: 15px; height: 24px; flex: none; display: flex; align-items: center; justify-content: center; position: relative; }
.grip::before { content: ""; width: 1px; height: 24px; background: #aca899; margin-right: 2px; }
.grip-wide { width: 18px; }
.dollar { font: bold 11px "Liberation Sans", sans-serif; fill: #806000; }
.ares { font: bold 6.500px "Liberation Mono", monospace; fill: #fff; }

.workspace { flex: 1; min-height: 0; display: flex; align-items: stretch; height: 666px; }
.modes { width: 30px; flex: none; display: flex; flex-direction: column; padding-left: 2px; }
.vhandle { width: 23px; height: 5px; flex: none; border: 1px solid; border-color: #fff #aca899 #aca899 #fff; }
.mb { width: 21px; height: 21px; flex: none; display: flex; align-items: center; justify-content: center; margin-left: 0; }
.mb.on { border: 1px solid #fff; background: repeating-conic-gradient(#f5f4ec 0 25%, #dcd9c8 0 50%) 0 0 / 2px 2px; }
.mi { width: 18px; height: 18px; display: block; overflow: visible; }
.msep { width: 23px; height: 5px; flex: none; margin-left: 0; position: relative; }
.msep::after { content: ""; position: absolute; left: 0; right: 0; top: 2px; height: 2px; border-top: 1px solid #aca899; border-bottom: 1px solid #fff; }
.msep-two { height: 16px; }
.msep-two::after { top: 5px; }
.msep-two::before { content: ""; position: absolute; left: 0; right: 0; top: 9px; height: 4px; border: 1px solid; border-color: #fff #aca899 #aca899 #fff; }
.msep-low { height: 9px; }
.msep-low::after { top: 5px; }
.lbl-ic { font: bold 7px "Liberation Mono", monospace; fill: #000080; }
.font-a { font: bold 20px "Liberation Serif", serif; line-height: 20px; }
.angle { width: 23px; height: 16px; flex: none; padding: 0 0 0 1px; border: 1px solid; border-color: #000 transparent transparent #000; background: #fff; font: 11px Roboto, sans-serif; outline: none; }

.panel { width: 121px; flex: none; display: flex; flex-direction: column; padding-top: 1px; }
.overview { height: 99px; flex: none; border: 1px solid #000; background: #e0e0d0; overflow: hidden; }
.thumb { display: block; }
.term-head { height: 18px; flex: none; display: flex; margin-top: 5px; border: 1px solid #000; border-bottom: 0; }
.p-btn { width: 17px; background: #ece9d8; border: 1px solid; border-color: #fff #716f64 #716f64 #fff; text-align: center; line-height: 16px; font-size: 11px; }
.term-title { flex: 1; background: #7494dc; color: #d6e4f8; text-align: center; line-height: 17px; font-size: 11px; }
.term-list { flex: 1; margin: 0; padding: 0; list-style: none; background: #fff; border: 1px solid #000; font-size: 11px; }
.term-list li { height: 13px; line-height: 13px; padding-left: 2px; }
.term-list .sel { background: #316ac5; color: #fff; }

.canvas { width: 1121px; flex: none; margin-left: 4px; border: 1px solid #000; background: #e0e0d0; overflow: hidden; }
.sheet { display: block; }
.dots { fill: none; stroke: #000; stroke-width: 1; stroke-dasharray: 1 8.198; shape-rendering: crispEdges; }
.border { fill: none; stroke: #0000a8; stroke-width: 1; shape-rendering: crispEdges; }
.wire { fill: none; stroke: #004000; stroke-width: 1; shape-rendering: crispEdges; }
.rd { fill: none; stroke: #800000; stroke-width: 1; shape-rendering: crispEdges; }
.body { fill: #c8c8a8; stroke: #800000; stroke-width: 1; }
.lcd { fill: #98b000; stroke: #000; stroke-width: 1; }
.pad { fill: #e0e0d0; stroke: #800000; stroke-width: 1; }
.blu { fill: none; stroke: #0000c0; stroke-width: 1; }
.sq-gray { fill: #808080; }
.sq-red { fill: #ff4040; }
.sq-blue { fill: #4040ff; }
.pin text { font: 8.500px "Liberation Mono", monospace; letter-spacing: -.75px; fill: #000; stroke: #000; stroke-width: .15px; }
.pin-end text { text-anchor: end; }
.ov { text-decoration: overline; }
.num text { font: 9px "Liberation Sans", sans-serif; fill: #000; }
.num-end text { text-anchor: end; }
.lcd-text { font: 16.500px "Liberation Mono", monospace; letter-spacing: -.9px; fill: #1c2400; }
.ref text { font: 11px "Liberation Sans", sans-serif; fill: #000; }
.val text { font: 8px "Liberation Mono", monospace; letter-spacing: -.1px; fill: #000; stroke: #000; stroke-width: .1px; }
.tx text { font: 8px "Liberation Mono", monospace; fill: #808080; letter-spacing: -.1px; }
.net text { font: 8.500px "Liberation Mono", monospace; letter-spacing: -.9px; fill: #0000c0; }
.gen1 { font: bold 14px "Liberation Sans", sans-serif; fill: #e0e0d0; text-anchor: middle; }

.statusbar { height: 27px; flex: none; display: flex; align-items: center; padding-left: 4px; position: relative; }
.handle-status { height: 20px; margin-right: 3px; }
.handle-status2 { height: 20px; margin-right: 4px; }
.play { width: 156px; height: 18px; flex: none; display: flex; border: 1px solid #000; background: #716f64; gap: 1px; }
.pb { flex: 1; border: 1px solid; border-color: #fff #aca899 #aca899 #fff; background: #ece9d8; display: flex; align-items: center; justify-content: center; }
.pi { width: 12px; height: 12px; display: block; }
.messages { width: 98px; height: 18px; flex: none; margin-left: 6px; display: flex; align-items: center; gap: 10px; padding-left: 3px; border: 1px solid; border-color: #aca899 #fff #fff #aca899; }
.msg-text { white-space: nowrap; font-size: 11px; }
.info { width: 14px; height: 14px; display: block; flex: none; }
.sep-status { margin-left: 2px; }
.state { width: 852px; height: 17px; flex: none; padding-left: 2px; line-height: 15px; font-size: 11px; color: #004c00; border: 1px solid; border-color: #aca899 #fff #fff #aca899; }
.coords { width: 123px; height: 17px; flex: none; position: relative; border: 1px solid; border-color: #aca899 #fff #fff #aca899; line-height: 15px; display: flex; padding-left: 5px; }
.c2 { margin-left: 6px; }
.unit { margin-left: auto; margin-right: 1px; color: #000080; }
.taskstrip { height: 2px; flex: none; background: #2a6ce8; }
.start { width: 107px; height: 2px; background: #3c8a3c; }
```
